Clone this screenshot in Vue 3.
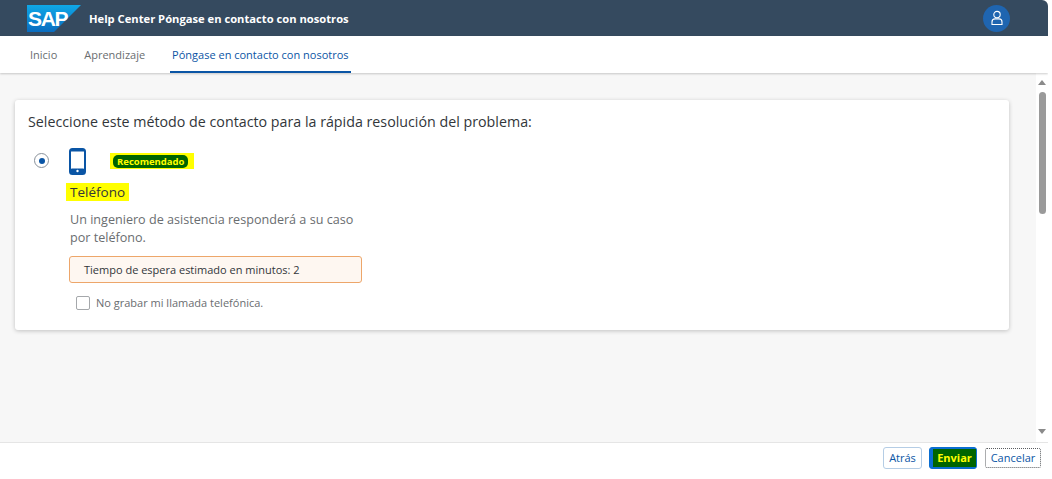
<template>
  <div class="page">
    <header class="shell">
      <svg class="logo" viewBox="0 0 54 27" width="54" height="27">
        <defs>
          <linearGradient id="sapBlue" x1="0" y1="0" x2="0" y2="1">
            <stop offset="0" stop-color="#0fa8e8" />
            <stop offset="1" stop-color="#0a6cbf" />
          </linearGradient>
        </defs>
        <polygon points="0,0 54,0 27,27 0,27" fill="url(#sapBlue)" />
        <text x="1" y="21" class="logo-text">SAP</text>
      </svg>
      <span class="shell-title">Help Center Póngase en contacto con nosotros</span>
      <div class="avatar">
        <svg viewBox="0 0 16 16" width="16" height="16" fill="none" stroke="#fff" stroke-width="1.1">
          <circle cx="8" cy="4.6" r="3.2" />
          <path d="M3 14.5v-2.6c0-1.7 1.3-3 3-3h4c1.7 0 3 1.3 3 3v2.6z" />
        </svg>
      </div>
    </header>

    <nav class="tabs">
      <a v-for="tab in tabs" :key="tab" class="tab" :class="{ '-active': tab === activeTab }">{{ tab }}</a>
    </nav>

    <div class="body">
      <main class="content">
        <section class="card">
          <h2 class="card-title">Seleccione este método de contacto para la rápida resolución del problema:</h2>
          <div class="option">
            <span class="radio"><span class="radio-dot"></span></span>
            <div class="option-main">
              <div class="option-head">
                <svg class="phone" viewBox="0 0 17 27" width="17" height="27">
                  <rect x="1" y="1" width="15" height="25" rx="2.5" fill="none" stroke="#0a55a5" stroke-width="2" />
                  <rect x="1" y="20.5" width="15" height="5.5" rx="2" fill="#0a55a5" />
                  <rect x="1" y="1" width="15" height="2.5" fill="#0a55a5" />
                  <circle cx="8.5" cy="23" r="1.2" fill="#fff" />
                </svg>
                <span class="mark"><span class="badge">Recomendado</span></span>
              </div>
              <h3 class="option-name">Teléfono</h3>
              <p class="option-text">Un ingeniero de asistencia responderá a su caso por teléfono.</p>
              <div class="wait">Tiempo de espera estimado en minutos: 2</div>
              <label class="check">
                <span class="check-box"></span>
                No grabar mi llamada telefónica.
              </label>
            </div>
          </div>
        </section>
      </main>
      <aside class="scrollbar">
        <span class="arrow -up"></span>
        <span class="thumb"></span>
        <span class="arrow -down"></span>
      </aside>
    </div>

    <footer class="footer">
      <button class="btn">Atrás</button>
      <button class="btn -primary"><span class="send">Enviar</span></button>
      <button class="btn -cancel">Cancelar</button>
    </footer>
  </div>
</template>

<script setup>
const tabs = ["Inicio", "Aprendizaje", "Póngase en contacto con nosotros"];
const activeTab = "Póngase en contacto con nosotros";
</script>

<style scoped>
.page {
  width: 1048px;
  height: 479px;
  display: flex;
  flex-direction: column;
  overflow: hidden;
  font-family: "Open Sans", "Liberation Sans", sans-serif;
  background: #fff;
  border-radius: 0 6px 6px 0;
}
.shell {
  height: 36px;
  flex: none;
  display: flex;
  align-items: center;
  padding-left: 27px;
  background: #354a5f;
  box-sizing: border-box;
}
.logo {
  align-self: flex-start;
  margin-top: 5px;
}
.logo-text {
  font-family: "Liberation Sans", Arial, sans-serif;
  font-weight: 700;
  font-size: 21px;
  letter-spacing: -1.3px;
  fill: #fff;
}
.shell-title {
  margin-left: 8px;
  font-size: 11.2px;
  font-weight: 700;
  color: #fff;
}
.avatar {
  width: 27px;
  height: 27px;
  margin-left: auto;
  margin-right: 38px;
  border-radius: 50%;
  background: #1f65b0;
  display: flex;
  align-items: center;
  justify-content: center;
}
.tabs {
  height: 37px;
  flex: none;
  display: flex;
  gap: 23px;
  padding-left: 28px;
  background: #fff;
  box-shadow: 0 1px 2px rgba(0, 0, 0, 0.2);
  position: relative;
  box-sizing: border-box;
}
.tab {
  padding: 0 2px;
  line-height: 37px;
  font-size: 11px;
  color: #6a6d70;
}
.tab.-active {
  color: #0a55a5;
  border-bottom: 2px solid #0a55a5;
  height: 37px;
  box-sizing: border-box;
}
.body {
  flex: 1;
  display: flex;
  min-height: 0;
}
.content {
  flex: 1;
  background: #f7f7f7;
  padding: 27px 27px 0 15px;
  min-width: 0;
}
.card {
  height: 230px;
  background: #fff;
  border-radius: 3px;
  box-shadow: 0 1px 4px rgba(0, 0, 0, 0.22);
  padding: 12px 13px;
  box-sizing: border-box;
}
.card-title {
  margin: 0;
  font-size: 14.25px;
  font-weight: 400;
  line-height: 20px;
  color: #32363a;
}
.option {
  display: flex;
  margin-top: 16px;
}
.radio {
  width: 13px;
  height: 13px;
  margin: 5px 0 0 6px;
  border: 1px solid #89919a;
  border-radius: 50%;
  display: flex;
  align-items: center;
  justify-content: center;
  flex: none;
}
.radio-dot {
  width: 6px;
  height: 6px;
  border-radius: 50%;
  background: #0a55a5;
}
.option-main {
  width: 293px;
  margin-left: 20px;
}
.option-head {
  display: flex;
  align-items: center;
}
.mark {
  margin: 0 0 2px 24px;
  padding: 2px 6px 1px 3px;
  background: #ffff00;
  display: flex;
}
.badge {
  padding: 1px 4px;
  border-radius: 5px;
  background: #006400;
  color: #ffff00;
  font-size: 9.5px;
  font-weight: 700;
  line-height: 11px;
}
.option-name {
  width: max-content;
  margin: 8px 0 0 -3px;
  padding: 0 4px;
  background: #ffff00;
  font-size: 13.5px;
  font-weight: 400;
  line-height: 18px;
  color: #32363a;
}
.option-text {
  margin: 10px 0 0;
  padding-left: 1px;
  font-size: 12.6px;
  line-height: 18px;
  color: #6a6d70;
}
.wait {
  height: 27px;
  margin-top: 9px;
  padding-left: 14px;
  border: 1px solid #eda66a;
  border-radius: 3px;
  background: #fef7f1;
  box-sizing: border-box;
  line-height: 25px;
  font-size: 11px;
  color: #32363a;
}
.check {
  display: flex;
  align-items: center;
  gap: 6px;
  margin: 12px 0 0 7px;
  font-size: 11px;
  color: #6a6d70;
}
.check-box {
  width: 12px;
  height: 12px;
  border: 1px solid #a5a8ab;
  border-radius: 2px;
}
.scrollbar {
  width: 12px;
  flex: none;
  background: #fff;
  display: flex;
  flex-direction: column;
  align-items: center;
  padding-left: 2px;
  padding-right: 2px;
  box-sizing: border-box;
}
.thumb {
  width: 7px;
  height: 122px;
  margin-top: 7px;
  border-radius: 4px;
  background: #9a9a9a;
}
.arrow {
  width: 0;
  height: 0;
  border-left: 4px solid transparent;
  border-right: 4px solid transparent;
}
.arrow.-up {
  margin-top: 7px;
  border-bottom: 5px solid #8a8a8a;
}
.arrow.-down {
  margin-top: auto;
  margin-bottom: 8px;
  border-top: 5px solid #8a8a8a;
}
.footer {
  height: 37px;
  flex: none;
  display: flex;
  align-items: center;
  justify-content: flex-end;
  gap: 7px;
  padding: 0 7px 7px 0;
  border-top: 1px solid #e5e5e5;
  background: #fff;
  box-sizing: border-box;
}
.btn {
  height: 22px;
  width: 39px;
  padding: 0;
  border: 1px solid #b5cde5;
  border-radius: 3px;
  background: #fff;
  color: #0a55a5;
  font-size: 11px;
  font-family: "Open Sans", sans-serif;
}
.btn.-primary {
  width: 48px;
  border-color: #0a6ed1;
  background: #0a6ed1;
  color: #ffff00;
  font-weight: 700;
}
.send {
  display: block;
  width: 43px;
  height: 18px;
  margin: 1px 0 0 3px;
  line-height: 18px;
  background: #006400;
}
.btn.-cancel {
  width: 56px;
  height: 20px;
  margin-left: 1px;
  border: 1px dotted #5a5d60;
  border-radius: 2px;
}
</style>
